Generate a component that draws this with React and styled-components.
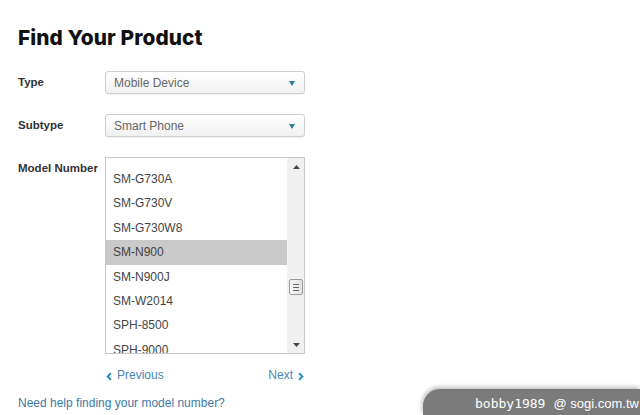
import React from 'react';
import styled, { createGlobalStyle } from 'styled-components';

// Data

const models = [
  'SM-G730A',
  'SM-G730V',
  'SM-G730W8',
  'SM-N900',
  'SM-N900J',
  'SM-W2014',
  'SPH-8500',
  'SPH-9000',
];

// Markup

export default function App() {
  return (
    <Page>
      <GlobalStyle />
      <Title>Find Your Product</Title>
      <Form>
        <Label>Type</Label>
        <Select>
          <span>Mobile Device</span>
          <Caret />
        </Select>

        <Label>Subtype</Label>
        <Select>
          <span>Smart Phone</span>
          <Caret />
        </Select>

        <Label>Model Number</Label>
        <div>
          <ListBox>
            <Options>
              {models.map((m) => (
                <Option key={m} selected={m === 'SM-N900'}>
                  {m}
                </Option>
              ))}
            </Options>
            <ScrollBar>
              <ArrowButton>
                <svg width="7" height="4" viewBox="0 0 7 4">
                  <path d="M0 4 L3.5 0 L7 4 Z" fill="#444" />
                </svg>
              </ArrowButton>
              <Track>
                <Thumb>
                  <Grip />
                  <Grip />
                  <Grip />
                </Thumb>
              </Track>
              <ArrowButton>
                <svg width="7" height="4" viewBox="0 0 7 4">
                  <path d="M0 0 L7 0 L3.5 4 Z" fill="#444" />
                </svg>
              </ArrowButton>
            </ScrollBar>
          </ListBox>
          <Pager>
            <PagerLink>
              <Chevron viewBox="0 0 8 10">
                <path d="M6 0.5 L1.5 5 L6 9.5 L7.5 8 L4.5 5 L7.5 2 Z" />
              </Chevron>
              Previous
            </PagerLink>
            <PagerLink>
              Next
              <Chevron viewBox="0 0 8 10">
                <path d="M2 0.5 L6.5 5 L2 9.5 L0.5 8 L3.5 5 L0.5 2 Z" />
              </Chevron>
            </PagerLink>
          </Pager>
        </div>
      </Form>
      <Help>Need help finding your model number?</Help>
      <Watermark>
        <Nick>bobby1989</Nick>
        <Site>@ sogi.com.tw</Site>
      </Watermark>
    </Page>
  );
}

// Style

const GlobalStyle = createGlobalStyle`
  html, body {
    margin: 0;
    padding: 0;
    background: #fff;
  }
  body {
    font-family: 'Liberation Sans', Arial, sans-serif;
    font-size: 12px;
    color: #333;
  }
`;

const Page = styled.div`
  width: 640px;
  height: 415px;
  padding: 26px 0 0 18px;
  box-sizing: border-box;
  overflow: hidden;
`;

const Title = styled.h1`
  margin: 0 0 21px;
  font-family: Inter, 'Liberation Sans', sans-serif;
  font-weight: 800;
  font-size: 20.8px;
  line-height: 24px;
  letter-spacing: 0.1px;
  color: #111;
`;

const Form = styled.div`
  display: grid;
  grid-template-columns: 87px 200px;
  row-gap: 20px;
  align-items: start;
`;

const Label = styled.div`
  font-weight: bold;
  font-size: 11.5px;
  line-height: 23px;
  color: #333;
  white-space: nowrap;
`;

const Select = styled.div`
  height: 23px;
  box-sizing: border-box;
  display: flex;
  align-items: center;
  justify-content: space-between;
  padding: 0 9px 0 8px;
  border: 1px solid #cfcfcf;
  border-radius: 3px;
  background: linear-gradient(#ffffff, #f1f1f1);
  box-shadow: 0 1px 1px rgba(0, 0, 0, 0.06);
  color: #666;
  font-size: 12px;
`;

const Caret = styled.span`
  width: 0;
  height: 0;
  border-left: 3px solid transparent;
  border-right: 3px solid transparent;
  border-top: 5px solid #2b7b95;
  margin-top: 1px;
`;

const ListBox = styled.div`
  height: 197px;
  box-sizing: border-box;
  border: 1px solid #c8c8c8;
  display: flex;
  background: #fff;
`;

const Options = styled.div`
  flex: 1;
  overflow: hidden;
  padding-top: 9px;
`;

const Option = styled.div`
  height: 24.4px;
  line-height: 24.4px;
  padding-left: 7px;
  color: #444;
  font-size: 12px;
  background: ${(p) => (p.selected ? '#c9c9c9' : 'transparent')};
`;

const ScrollBar = styled.div`
  width: 16px;
  display: flex;
  flex-direction: column;
  background: #f0f0f0;
  border-left: 1px solid #f4f4f4;
`;

const ArrowButton = styled.div`
  height: 17px;
  display: flex;
  align-items: center;
  justify-content: center;
`;

const Track = styled.div`
  flex: 1;
  padding-top: 104px;
`;

const Thumb = styled.div`
  width: 14px;
  height: 16px;
  margin-left: 1px;
  box-sizing: border-box;
  border: 1px solid #9a9a9a;
  border-radius: 2px;
  background: linear-gradient(90deg, #f7f7f7, #e2e2e2);
  display: flex;
  flex-direction: column;
  align-items: center;
  justify-content: center;
  gap: 2px;
`;

const Grip = styled.span`
  width: 6px;
  height: 1px;
  background: #666;
`;

const Pager = styled.div`
  display: flex;
  justify-content: space-between;
  align-items: center;
  margin-top: 14px;
`;

const PagerLink = styled.a`
  display: flex;
  align-items: center;
  gap: 5px;
  color: #4a86b0;
  font-size: 12px;
  cursor: pointer;
`;

const Chevron = styled.svg`
  width: 7px;
  height: 9px;
  margin-top: 2px;
  fill: #1b8bc3;
`;

const Help = styled.a`
  display: block;
  margin-top: 14px;
  color: #3d79a6;
  font-size: 12px;
`;

const Watermark = styled.div`
  position: absolute;
  left: 423px;
  top: 389px;
  width: 217px;
  height: 26px;
  box-sizing: border-box;
  padding: 3px 0 0 52px;
  background: #7b7b7b;
  border-top-left-radius: 17px;
  box-shadow: -1px -2px 4px rgba(0, 0, 0, 0.25);
  display: flex;
  align-items: center;
  gap: 8px;
  color: #fff;
  white-space: nowrap;
`;

const Nick = styled.span`
  font-family: 'DejaVu Sans Mono', monospace;
  font-size: 13px;
`;

const Site = styled.span`
  font-family: 'Liberation Sans', Arial, sans-serif;
  font-size: 13px;
`;
